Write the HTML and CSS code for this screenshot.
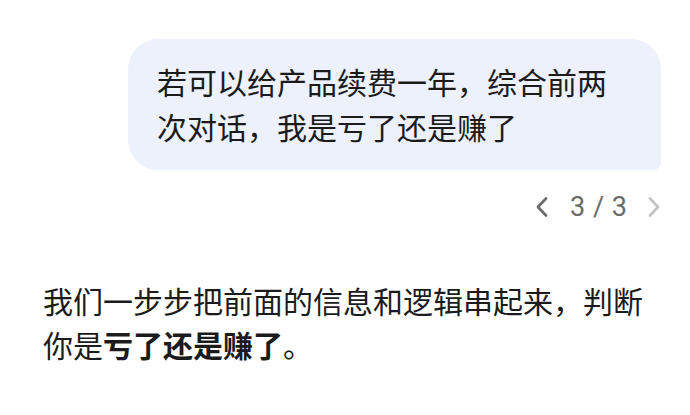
FILE: index.html
```html
<!DOCTYPE html>
<html lang="zh-CN">
<head>
<meta charset="utf-8">
<title>对话</title>
<link rel="stylesheet" href="styles.css">
</head>
<body>
<main class="chat">
  <div class="user-row">
    <div class="bubble">若可以给产品续费一年，综合前两次对话，我是亏了还是赚了</div>
  </div>
  <div class="pager">
    <button class="nav prev" aria-label="上一条">
      <svg viewBox="0 0 12 20" width="12" height="20"><path d="M10 1.5 L2 10 L10 18.5" fill="none" stroke="currentColor" stroke-width="2.6" stroke-linecap="round" stroke-linejoin="round"/></svg>
    </button>
    <span class="count">3 / 3</span>
    <button class="nav next" aria-label="下一条">
      <svg viewBox="0 0 12 20" width="12" height="20"><path d="M2 1.5 L10 10 L2 18.5" fill="none" stroke="currentColor" stroke-width="2.6" stroke-linecap="round" stroke-linejoin="round"/></svg>
    </button>
  </div>
  <p class="answer">我们一步步把前面的信息和逻辑串起来，判断你是<strong>亏了还是赚了</strong>。</p>
</main>
</body>
</html>
```
FILE: styles.css
```css
html, body {
  margin: 0;
  background: #ffffff;
}

body {
  font-family: Roboto, "Noto Sans CJK SC", sans-serif;
  color: #1b1b1b;
  width: 690px;
  height: 415px;
  overflow: hidden;
}

.chat {
  padding: 39px 0 0 43px;
}

.user-row {
  display: flex;
  justify-content: flex-end;
  padding-right: 29px;
}

.bubble {
  max-width: 533px;
  box-sizing: border-box;
  padding: 20px 28px 21px 29px;
  background: #ecf1fc;
  border-radius: 30px 30px 8px 30px;
  font-family: "Noto Sans CJK SC", sans-serif;
  font-size: 30px;
  line-height: 45px;
}

.pager {
  display: flex;
  justify-content: flex-end;
  align-items: center;
  margin-top: 22px;
  padding-right: 30px;
  height: 30px;
}

.nav {
  display: flex;
  align-items: center;
  justify-content: center;
  padding: 0;
  border: 0;
  background: none;
  width: 12px;
  height: 20px;
}

.prev {
  color: #6a6a6a;
}

.next {
  color: #c2c2c2;
}

.count {
  font-size: 27px;
  color: #6a6a6a;
  margin: 0 21px 0 22px;
  line-height: 30px;
  word-spacing: 1px;
}

.answer {
  margin: 56px 0 0;
  padding-right: 40px;
  font-family: "Noto Sans CJK SC", sans-serif;
  font-size: 30px;
  line-height: 44px;
}

.answer strong {
  font-weight: 700;
}
```
